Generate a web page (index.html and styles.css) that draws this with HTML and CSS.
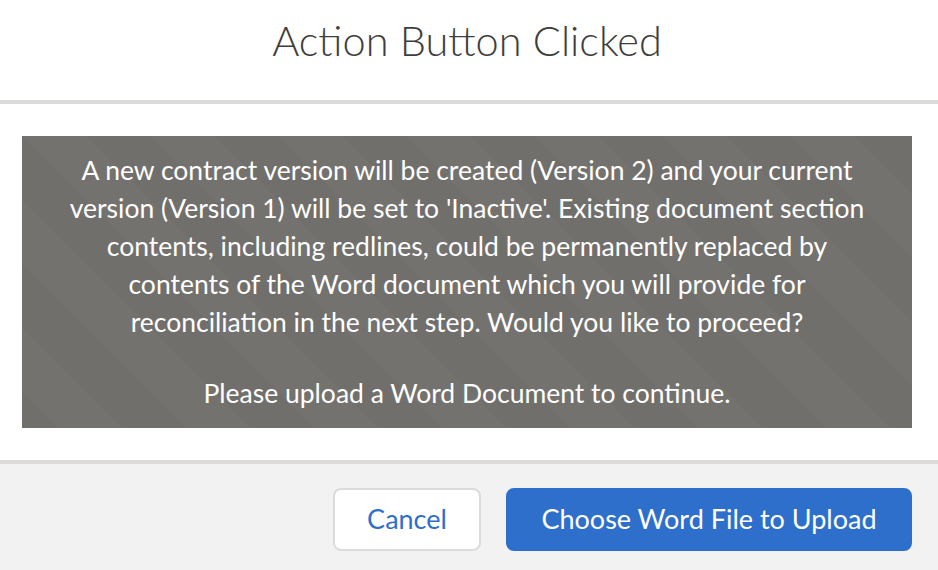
FILE: index.html
```html
<!DOCTYPE html>
<html lang="en">
<head>
<meta charset="utf-8">
<title>Action Button Clicked</title>
<link rel="stylesheet" href="styles.css">
</head>
<body>
<div class="modal">
  <header class="modal-header">
    <h2 class="modal-title">Action Button Clicked</h2>
  </header>
  <section class="modal-body">
    <div class="notice">
      <p class="notice-text">A new contract version will be created (Version 2) and your current<br>version (Version 1) will be set to 'Inactive'. Existing document section<br>contents, including redlines, could be permanently replaced by<br>contents of the Word document which you will provide for<br>reconciliation in the next step. Would you like to proceed?</p>
      <p class="notice-text">Please upload a Word Document to continue.</p>
    </div>
  </section>
  <footer class="modal-footer">
    <button class="btn btn-neutral" type="button">Cancel</button>
    <button class="btn btn-brand" type="button">Choose Word File to Upload</button>
  </footer>
</div>
</body>
</html>
```

FILE: styles.css
```css
* { box-sizing: border-box; }
html, body {
  margin: 0;
  padding: 0;
  background: #ffffff;
}
body {
  font-family: "Lato", "Noto Sans", sans-serif;
  color: #3e3e3c;
  width: 938px;
  height: 570px;
  overflow: hidden;
}
.modal {
  display: flex;
  flex-direction: column;
  height: 570px;
}
.modal-header {
  height: 104px;
  border-bottom: 4px solid #dddbda;
  display: flex;
  justify-content: center;
  padding-top: 12px;
  padding-right: 4px;
}
.modal-title {
  margin: 0;
  font-size: 41.5px;
  line-height: 56px;
  font-weight: 300;
  color: #3e3e3c;
}
.modal-body {
  height: 360px;
  padding: 32px 26px 32px 22px;
  border-bottom: 4px solid #dddbda;
}
.notice {
  height: 292px;
  background-color: #716f6c;
  background-image: linear-gradient(45deg, rgba(255,255,255,0.02) 25%, transparent 25%, transparent 50%, rgba(255,255,255,0.02) 50%, rgba(255,255,255,0.02) 75%, transparent 75%, transparent);
  background-size: 128px 128px;
  color: #ffffff;
  text-align: center;
  padding-top: 15px;
}
.notice-text {
  margin: 0 0 33px;
  font-size: 26.5px;
  line-height: 38px;
}
.modal-footer {
  flex: 1;
  background: #f3f2f2;
  display: flex;
  justify-content: flex-end;
  align-items: flex-start;
  gap: 25px;
  padding: 24px 26px 0 0;
}
.btn {
  height: 63px;
  border-radius: 8px;
  font-family: "Lato", "Noto Sans", sans-serif;
  font-size: 27px;
  padding: 0 0 3px;
  white-space: nowrap;
  cursor: pointer;
}
.btn-neutral {
  width: 148px;
  background: #ffffff;
  border: 2px solid #dddbda;
  color: #2e6fcc;
}
.btn-brand {
  width: 406px;
  background: #2e6fcc;
  border: 2px solid #2e6fcc;
  color: #ffffff;
}
```
